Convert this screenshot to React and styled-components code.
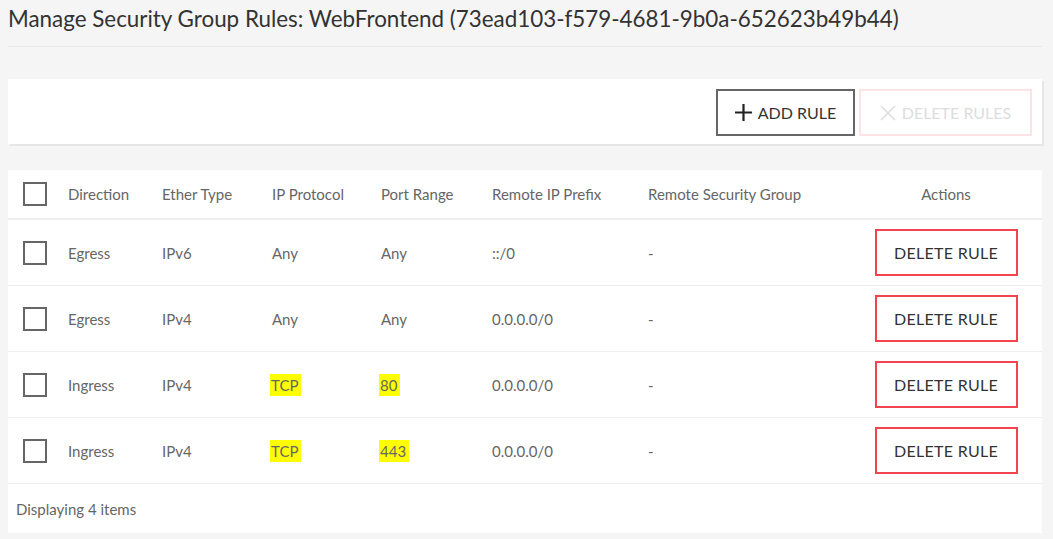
import styled, { createGlobalStyle } from 'styled-components';

const GlobalStyle = createGlobalStyle`
  html, body {
    margin: 0;
    padding: 0;
    background: #f5f5f5;
  }
  body {
    font-family: Lato, "Open Sans", sans-serif;
    color: #666;
  }
`;

const rules = [
  { direction: 'Egress', ether: 'IPv6', protocol: 'Any', port: 'Any', prefix: '::/0', group: '-' },
  { direction: 'Egress', ether: 'IPv4', protocol: 'Any', port: 'Any', prefix: '0.0.0.0/0', group: '-' },
  { direction: 'Ingress', ether: 'IPv4', protocol: 'TCP', port: '80', prefix: '0.0.0.0/0', group: '-', marked: true },
  { direction: 'Ingress', ether: 'IPv4', protocol: 'TCP', port: '443', prefix: '0.0.0.0/0', group: '-', marked: true },
];

const columns = ['Direction', 'Ether Type', 'IP Protocol', 'Port Range', 'Remote IP Prefix', 'Remote Security Group'];

const PlusIcon = () => (
  <svg width="17" height="17" viewBox="0 0 17 17">
    <path d="M8.5 0v17M0 8.5h17" stroke="#222" strokeWidth="2.2" fill="none" />
  </svg>
);

const CrossIcon = () => (
  <svg width="16" height="16" viewBox="0 0 16 16">
    <path d="M1 1l14 14M15 1L1 15" stroke="#ddd" strokeWidth="1.6" fill="none" />
  </svg>
);

const App = () => {
  return (
    <Page>
      <GlobalStyle />
      <Title>Manage Security Group Rules: WebFrontend (73ead103-f579-4681-9b0a-652623b49b44)</Title>
      <Toolbar>
        <ToolButton $width={139}>
          <PlusIcon />
          ADD RULE
        </ToolButton>
        <ToolButton $width={173} disabled>
          <CrossIcon />
          DELETE RULES
        </ToolButton>
      </Toolbar>
      <TableCard>
        <HeadRow>
          <CheckCell><Checkbox /></CheckCell>
          {columns.map(c => <Cell key={c}>{c}</Cell>)}
          <ActionCell>Actions</ActionCell>
        </HeadRow>
        {rules.map((r, i) => (
          <Row key={i}>
            <CheckCell><Checkbox /></CheckCell>
            <Cell>{r.direction}</Cell>
            <Cell>{r.ether}</Cell>
            <Cell>{r.marked ? <Mark>{r.protocol}</Mark> : r.protocol}</Cell>
            <Cell>{r.marked ? <Mark>{r.port}</Mark> : r.port}</Cell>
            <Cell>{r.prefix}</Cell>
            <Cell>{r.group}</Cell>
            <ActionCell>
              <DeleteButton>DELETE RULE</DeleteButton>
            </ActionCell>
          </Row>
        ))}
        <Footer>Displaying 4 items</Footer>
      </TableCard>
    </Page>
  );
};

export default App;

const Page = styled.div`
  width: 1034px;
  padding: 0 8px;
`;

const Title = styled.h1`
  margin: 0;
  height: 47px;
  box-sizing: border-box;
  padding-top: 5px;
  font-size: 22.4px;
  font-weight: 400;
  color: #333;
  border-bottom: 1px solid #e8e8e8;
  line-height: 28px;
`;

const Toolbar = styled.div`
  margin-top: 32px;
  height: 65px;
  background: #fff;
  box-shadow: 2px 2px 0 #e6e6e6;
  display: flex;
  justify-content: flex-end;
  align-items: center;
  gap: 4px;
  padding-right: 10px;
`;

const ToolButton = styled.button`
  width: ${p => p.$width}px;
  height: 47px;
  margin-top: 2px;
  display: flex;
  align-items: center;
  justify-content: center;
  gap: 6px;
  padding: 0;
  background: #fff;
  font-family: inherit;
  font-size: 16px;
  color: ${p => (p.disabled ? '#ddd' : '#333')};
  border: 2px solid ${p => (p.disabled ? '#fde2e6' : '#666')};
  cursor: ${p => (p.disabled ? 'default' : 'pointer')};
`;

const TableCard = styled.div`
  margin-top: 26px;
  background: #fff;
`;

const grid = `
  display: grid;
  grid-template-columns: 48px 94px 110px 109px 111px 156px 214px 192px;
  align-items: center;
`;

const HeadRow = styled.div`
  ${grid}
  height: 48px;
  border-bottom: 2px solid #eee;
`;

const Row = styled.div`
  ${grid}
  height: 65px;
  border-bottom: 1px solid #eee;
`;

const Cell = styled.div`
  padding-left: 12px;
  font-size: 15px;
  white-space: nowrap;
`;

const CheckCell = styled.div`
  padding-left: 15px;
  display: flex;
  align-items: center;
`;

const Checkbox = styled.span`
  width: 20px;
  height: 20px;
  border: 2px solid #666;
  display: inline-block;
`;

const ActionCell = styled.div`
  display: flex;
  justify-content: center;
  font-size: 15px;
`;

const DeleteButton = styled.button`
  width: 143px;
  height: 47px;
  background: #fff;
  border: 2px solid #f2434f;
  font-family: inherit;
  font-size: 16px;
  letter-spacing: 0.3px;
  color: #333;
  cursor: pointer;
`;

const Mark = styled.span`
  background: #ffff00;
  padding: 2px 3px 2px 1px;
  margin-left: -2px;
`;

const Footer = styled.div`
  height: 49px;
  display: flex;
  align-items: center;
  padding-left: 8px;
  font-size: 15px;
`;
